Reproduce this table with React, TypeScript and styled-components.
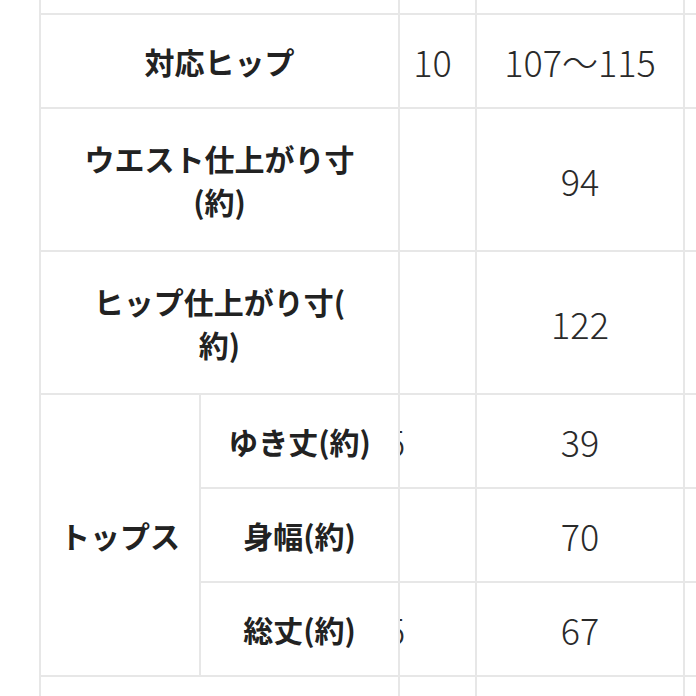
import styled, { createGlobalStyle } from "styled-components";

const GlobalStyle = createGlobalStyle`
  html, body {
    margin: 0;
    padding: 0;
    background: #ffffff;
    overflow: hidden;
  }
  body {
    font-family: "Noto Sans CJK JP", "Noto Sans", sans-serif;
    color: #222;
  }
`;

const Page = styled.div`
  width: 696px;
  height: 696px;
  overflow: hidden;
  background: #ffffff;
`;

// the table lines are the gaps of the grid
const Sheet = styled.div`
  margin-left: 39px;
  width: 760px;
  display: grid;
  grid-template-columns: 158px 197px 75px 206px 100px;
  grid-template-rows: 13px 92px 141px 141px 92px 92px 92px 60px;
  gap: 2px;
  padding-left: 2px;
  background: #e7e7e7;
`;

const Cell = styled.div<{ $cols?: number; $rows?: number }>`
  grid-column: span ${(p) => p.$cols ?? 1};
  grid-row: span ${(p) => p.$rows ?? 1};
  background: #fff;
  display: flex;
  align-items: center;
  justify-content: center;
  text-align: center;
  overflow: hidden;
`;

const Label = styled(Cell)`
  font-family: "Noto Sans CJK JP", "Noto Sans", sans-serif;
  font-weight: 700;
  font-size: 30px;
  line-height: 43px;
  color: #222;
  white-space: nowrap;
`;

const Num = styled(Cell)`
  font-family: "Noto Sans CJK JP", "Noto Sans", sans-serif;
  font-weight: 300;
  font-size: 36px;
  color: #2a2a2a;
  white-space: nowrap;
`;

const SizeNum = styled(Num)`
  padding-right: 10px;
`;

const Peek = styled(Cell)`
  justify-content: flex-start;
  font-family: "Noto Sans CJK JP", "Noto Sans", sans-serif;
  font-weight: 300;
  font-size: 36px;
  color: #2a2a2a;

  span {
    margin-left: -14px;
  }
`;

const App = () => {
  return (
    <Page>
      <GlobalStyle />
      <Sheet>
        <Cell $cols={2} />
        <Cell />
        <Cell />
        <Cell />

        <Label $cols={2}>対応ヒップ</Label>
        <SizeNum>10</SizeNum>
        <Num>107〜115</Num>
        <Cell />

        <Label $cols={2}>
          ウエスト仕上がり寸
          <br />
          (約)
        </Label>
        <Cell />
        <Num>94</Num>
        <Cell />

        <Label $cols={2}>
          ヒップ仕上がり寸(
          <br />
          約)
        </Label>
        <Cell />
        <Num>122</Num>
        <Cell />

        <Label $rows={3}>トップス</Label>
        <Label>ゆき丈(約)</Label>
        <Peek>
          <span>5</span>
        </Peek>
        <Num>39</Num>
        <Cell />

        <Label>身幅(約)</Label>
        <Cell />
        <Num>70</Num>
        <Cell />

        <Label>総丈(約)</Label>
        <Peek>
          <span>5</span>
        </Peek>
        <Num>67</Num>
        <Cell />

        <Cell $cols={2} />
        <Cell />
        <Cell />
        <Cell />
      </Sheet>
    </Page>
  );
};

export default App;
